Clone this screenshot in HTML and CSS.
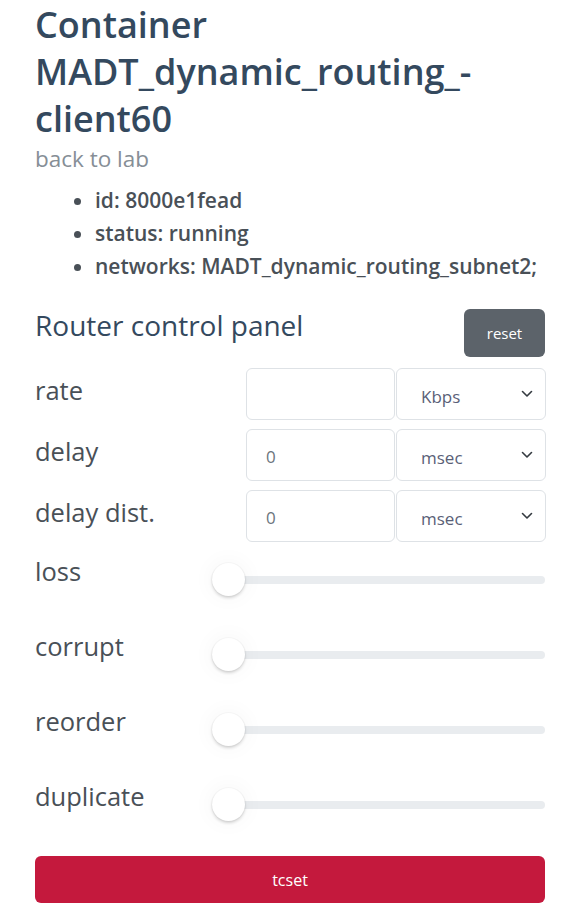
FILE: index.html
```html
<!DOCTYPE html>
<html lang="en">
<head>
<meta charset="utf-8">
<title>Container MADT_dynamic_routing_-client60</title>
<link rel="stylesheet" href="styles.css">
</head>
<body>
<main class="page">
  <h1 class="title">Container MADT_dynamic_routing_-client60</h1>
  <a class="back" href="#">back to lab</a>
  <ul class="meta">
    <li>id: 8000e1fead</li>
    <li>status: running</li>
    <li>networks: MADT_dynamic_routing_subnet2;</li>
  </ul>

  <section class="panel">
    <div class="panel-head">
      <h2 class="panel-title">Router control panel</h2>
      <button class="btn btn-reset" type="button">reset</button>
    </div>

    <div class="field-rows">
      <div class="field-row">
        <label class="field-label">rate</label>
        <input class="field-input" type="text" value="">
        <div class="select-wrap">
          <select class="field-select"><option>Kbps</option></select>
          <svg class="chevron" viewBox="0 0 12 8" width="12" height="8"><path d="M1.5 1.5 L6 6 L10.5 1.5" fill="none" stroke="#343a40" stroke-width="1.6" stroke-linecap="round" stroke-linejoin="round"/></svg>
        </div>
      </div>
      <div class="field-row">
        <label class="field-label">delay</label>
        <input class="field-input" type="text" value="0">
        <div class="select-wrap">
          <select class="field-select"><option>msec</option></select>
          <svg class="chevron" viewBox="0 0 12 8" width="12" height="8"><path d="M1.5 1.5 L6 6 L10.5 1.5" fill="none" stroke="#343a40" stroke-width="1.6" stroke-linecap="round" stroke-linejoin="round"/></svg>
        </div>
      </div>
      <div class="field-row">
        <label class="field-label">delay dist.</label>
        <input class="field-input" type="text" value="0">
        <div class="select-wrap">
          <select class="field-select"><option>msec</option></select>
          <svg class="chevron" viewBox="0 0 12 8" width="12" height="8"><path d="M1.5 1.5 L6 6 L10.5 1.5" fill="none" stroke="#343a40" stroke-width="1.6" stroke-linecap="round" stroke-linejoin="round"/></svg>
        </div>
      </div>
    </div>

    <div class="slider-rows">
      <div class="slider-row">
        <label class="field-label slider-label">loss</label>
        <input class="range" type="range" min="0" max="100" value="0">
      </div>
      <div class="slider-row">
        <label class="field-label slider-label">corrupt</label>
        <input class="range" type="range" min="0" max="100" value="0">
      </div>
      <div class="slider-row">
        <label class="field-label slider-label">reorder</label>
        <input class="range" type="range" min="0" max="100" value="0">
      </div>
      <div class="slider-row">
        <label class="field-label slider-label">duplicate</label>
        <input class="range" type="range" min="0" max="100" value="0">
      </div>
    </div>

    <button class="btn btn-tcset" type="button">tcset</button>
  </section>
</main>
</body>
</html>
```

FILE: styles.css
```css
html, body {
  margin: 0;
  padding: 0;
  background: #ffffff;
}

body {
  font-family: "Open Sans", "Noto Sans", "Liberation Sans", sans-serif;
  color: #34495e;
}

.page {
  padding: 0 35px;
  width: 510px;
}

.title {
  margin: 0;
  padding-top: 1px;
  font-size: 36px;
  line-height: 47px;
  font-weight: 600;
  color: #34495e;
}

.back {
  display: block;
  font-size: 22.5px;
  line-height: 33px;
  color: #868e96;
  text-decoration: none;
}

.meta {
  margin: 9px 0 0;
  padding-left: 60px;
  font-size: 21px;
  line-height: 33px;
  font-weight: 600;
  color: #495057;
}

.panel {
  margin-top: 26px;
}

.panel-head {
  display: flex;
  justify-content: space-between;
  align-items: flex-start;
}

.panel-title {
  margin: 0;
  font-size: 28px;
  line-height: 33px;
  font-weight: 400;
  color: #34495e;
}

.btn {
  font-family: inherit;
  border: none;
  color: #ffffff;
  cursor: pointer;
  border-radius: 6px;
}

.btn-reset {
  width: 81px;
  height: 48px;
  background: #5c636a;
  font-size: 15px;
}

.field-rows {
  display: flex;
  flex-direction: column;
  gap: 9px;
  margin-top: 11px;
}

.field-row {
  display: grid;
  grid-template-columns: 210px 149px 150px;
  column-gap: 1px;
  align-items: center;
  height: 52px;
}

.field-label {
  font-size: 25.5px;
  line-height: 34px;
  color: #495057;
  padding-bottom: 8px;
}

.field-input,
.field-select {
  box-sizing: border-box;
  height: 52px;
  width: 100%;
  border: 1px solid #dee2e6;
  border-radius: 6px;
  background: #ffffff;
  font-family: inherit;
  font-size: 17px;
  outline: none;
}

.field-input {
  padding: 2px 19px 0;
  color: #6c757d;
}

.select-wrap {
  position: relative;
  height: 52px;
}

.field-select {
  -webkit-appearance: none;
  appearance: none;
  padding: 4px 24px 0;
  color: #5a5f77;
}

.chevron {
  position: absolute;
  right: 13px;
  top: 22px;
  pointer-events: none;
}

.slider-rows {
  display: flex;
  flex-direction: column;
}

.slider-row {
  display: grid;
  grid-template-columns: 177px 1fr;
  align-items: center;
  height: 75px;
}

.slider-label {
  padding-bottom: 18px;
}

.range {
  -webkit-appearance: none;
  appearance: none;
  width: 100%;
  height: 36px;
  margin: 0;
  background: transparent;
}

.range::-webkit-slider-runnable-track {
  height: 8px;
  background: #e9ecef;
  border-radius: 4px;
}

.range::-webkit-slider-thumb {
  -webkit-appearance: none;
  appearance: none;
  width: 33px;
  height: 33px;
  margin-top: -12.5px;
  border-radius: 50%;
  background: #ffffff;
  box-shadow: 0 2px 3px rgba(0, 0, 0, 0.16), 0 0 0 1px rgba(0, 0, 0, 0.025), 0 0 18px 6px rgba(0, 0, 0, 0.025);
}

.btn-tcset {
  display: block;
  width: 100%;
  height: 47px;
  margin-top: 14px;
  background: #c4193d;
  font-size: 16px;
}
```
